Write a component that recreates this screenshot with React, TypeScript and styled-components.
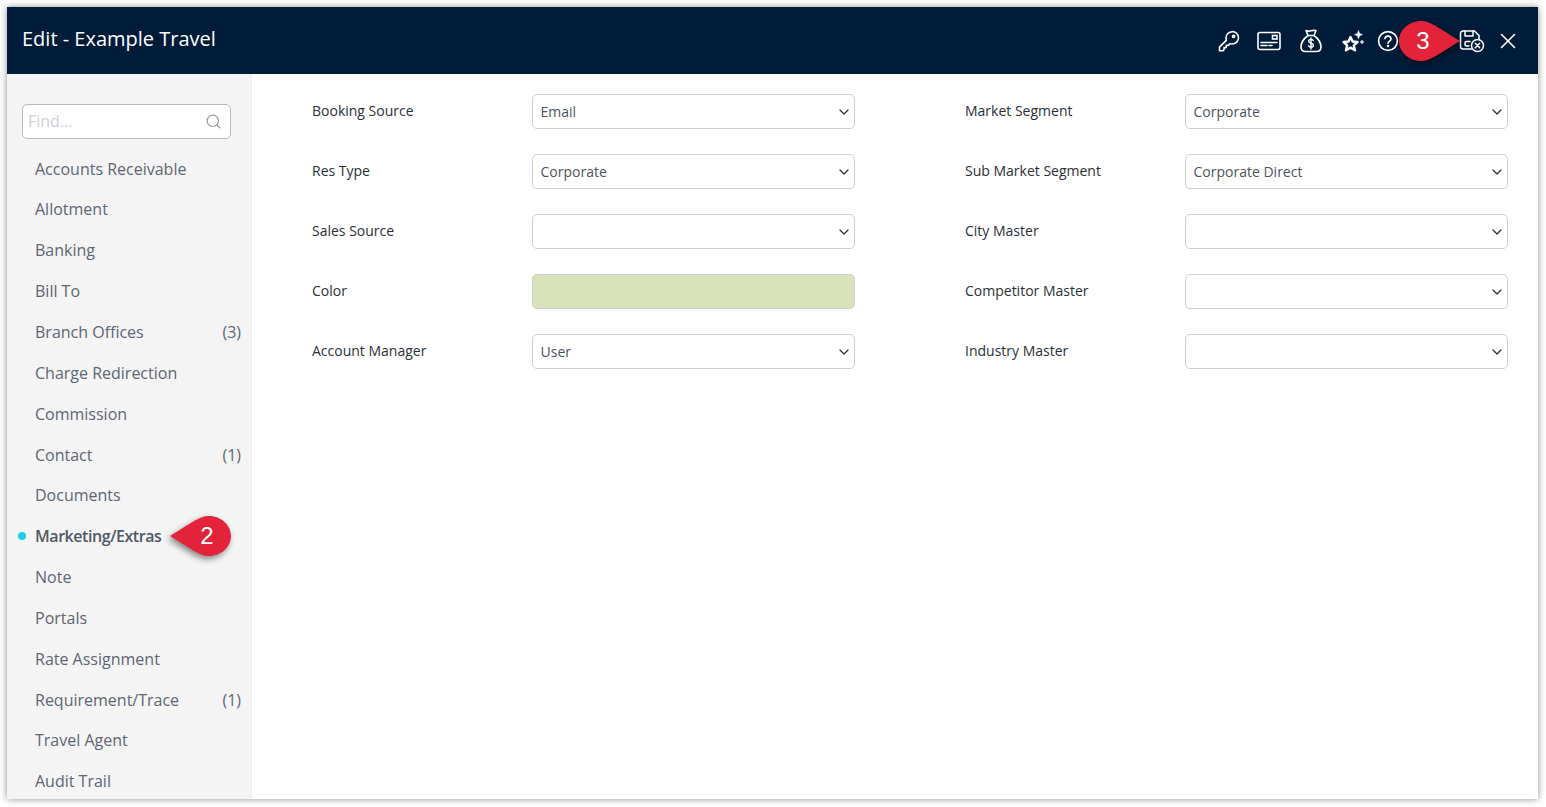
import styled, { createGlobalStyle } from "styled-components";
import { Search, X } from "lucide-react";

const GlobalStyle = createGlobalStyle`
  html, body {
    margin: 0;
    background: #fff;
    overflow: hidden;
  }
  body {
    font-family: "Open Sans", "Liberation Sans", sans-serif;
  }
`;

const navItems = [
  { label: "Accounts Receivable" },
  { label: "Allotment" },
  { label: "Banking" },
  { label: "Bill To" },
  { label: "Branch Offices", count: 3 },
  { label: "Charge Redirection" },
  { label: "Commission" },
  { label: "Contact", count: 1 },
  { label: "Documents" },
  { label: "Marketing/Extras", active: true },
  { label: "Note" },
  { label: "Portals" },
  { label: "Rate Assignment" },
  { label: "Requirement/Trace", count: 1 },
  { label: "Travel Agent" },
  { label: "Audit Trail" },
];

const fields = [
  { label: "Booking Source", value: "Email" },
  { label: "Market Segment", value: "Corporate" },
  { label: "Res Type", value: "Corporate" },
  { label: "Sub Market Segment", value: "Corporate Direct" },
  { label: "Sales Source", value: "" },
  { label: "City Master", value: "" },
  { label: "Color", color: "#d8e3bc" },
  { label: "Competitor Master", value: "" },
  { label: "Account Manager", value: "User" },
  { label: "Industry Master", value: "" },
];

const Callout = ({ n, side }: { n: number; side: "left" | "right" }) => (
  <CalloutWrap $side={side}>
    <CalloutShape $side={side} width="63" height="42" viewBox="0 0 63 42">
      <path d="M23 1C33 1 42 9 62 21C42 33 33 41 23 41C11 41 1 32 1 21C1 10 11 1 23 1Z" fill="#e32339" />
    </CalloutShape>
    <CalloutNumber $side={side}>{n}</CalloutNumber>
  </CalloutWrap>
);

const KeyIcon = () => (
  <svg width="24" height="24" viewBox="0 0 24 24" fill="none" stroke="currentColor" strokeWidth="1.6" strokeLinejoin="round" strokeLinecap="round">
    <path d="M15.2 2.5a6.3 6.3 0 0 1 6.3 6.3c0 3.4-2.9 6.2-6.3 6.2-.8 0-1.5-.1-2.1-.4l-1.700 1.800H9.200v2.200H7v2.100l-1 1H2.500v-3.600l7-7a6 6 0 0 1-.5-2.300c0-3.400 2.800-6.100 6.200-6.100Z" />
    <circle cx="16.6" cy="7.3" r="1.1" />
  </svg>
);

const CardIcon = () => (
  <svg width="24" height="20" viewBox="0 0 24 20" fill="none" stroke="currentColor" strokeWidth="1.6" strokeLinecap="round">
    <rect x="1" y="1.5" width="22" height="17" rx="2" />
    <rect x="15.5" y="4.5" width="4.5" height="3.5" />
    <path d="M4 11.5h16M4 14.5h6M12 14.5h3" />
  </svg>
);

const BagIcon = () => (
  <svg width="22" height="24" viewBox="0 0 22 24" fill="none" stroke="currentColor" strokeWidth="1.6" strokeLinejoin="round" strokeLinecap="round">
    <path d="M6 1.500c2 1 3 .8 5 .2 2-.6 3.500-.4 5-.2l-2 5H8L6 1.500Z" />
    <path d="M8 6.500C4 9.500 1 14 1 18c0 3 2 4.500 4.500 4.500h11c2.500 0 4.500-1.500 4.500-4.500 0-4-3-8.500-7-11.500" />
    <path d="M13.200 11.500c-.5-.8-1.300-1.100-2.200-1.100-1.300 0-2.300.7-2.300 1.900 0 2.600 4.700 1.300 4.700 3.900 0 1.200-1 1.900-2.400 1.900-1 0-1.900-.4-2.400-1.200M11 9v11" strokeWidth="1.400" />
  </svg>
);

const StarsIcon = () => (
  <svg width="24" height="24" viewBox="0 0 24 24" fill="none" stroke="currentColor" strokeLinejoin="round">
    <path d="M9.500 8l2.100 4.500 5 .5-3.800 3.300 1.200 5-4.500-2.700L5 21.300l1.200-5-3.700-3.300 5-.5 2-4.500Z" strokeWidth="2.400" />
    <path d="M17.500 1.500l1.100 3 2.900 1.100-2.900 1.100-1.100 3-1.100-3-2.900-1.100 2.900-1.100 1.100-3Z" fill="currentColor" strokeWidth="0.5" />
    <path d="M21 11l.6 1.400 1.400.6-1.400.6L21 15l-.6-1.400-1.400-.6 1.400-.6L21 11Z" fill="currentColor" strokeWidth="0.5" />
  </svg>
);

const HelpIcon = () => (
  <svg width="22" height="22" viewBox="0 0 22 22" fill="none" stroke="currentColor" strokeWidth="1.600" strokeLinecap="round">
    <circle cx="11" cy="11" r="9.400" />
    <path d="M7.900 8.500a3.100 3.100 0 0 1 6.100.4c0 2-3 2.400-3 4.300" />
    <circle cx="11" cy="16" r="0.500" fill="currentColor" />
  </svg>
);

const SaveCancelIcon = () => (
  <svg width="26" height="24" viewBox="0 0 26 24" fill="none" stroke="currentColor" strokeWidth="1.500" strokeLinejoin="round" strokeLinecap="round">
    <path d="M13 20H4a2.500 2.500 0 0 1-2.500-2.500v-13A2.500 2.500 0 0 1 4 2h11.500L20 6.500v4" />
    <path d="M6 2v5h8V2" />
    <path d="M11 12.500H7.500a1.500 1.500 0 0 0-1.500 1.500v1.500a1.500 1.500 0 0 0 1.500 1.500H10" />
    <circle cx="18.500" cy="16.500" r="6" />
    <path d="M16.300 14.300l4.400 4.400M20.700 14.300l-4.400 4.400" />
  </svg>
);

export default function App() {
  return (
    <Page>
      <GlobalStyle />
      <Window>
        <Header>
          <Title>Edit - Example Travel</Title>
          <Toolbar>
            <ToolButton $width={39}><KeyIcon /></ToolButton>
            <ToolButton $width={42}><CardIcon /></ToolButton>
            <ToolButton $width={42}><BagIcon /></ToolButton>
            <ToolButton $width={42}><StarsIcon /></ToolButton>
            <ToolButton $width={28}><HelpIcon /></ToolButton>
            <SaveButton>
              <Callout n={3} side="right" />
              <SaveCancelIcon />
            </SaveButton>
            <ToolButton $width={36}><X size={26} strokeWidth={1.5} /></ToolButton>
          </Toolbar>
        </Header>
        <Body>
          <Sidebar>
            <SearchBox>
              <SearchInput placeholder="Find..." />
              <Search size={17} strokeWidth={1.6} color="#8f959b" />
            </SearchBox>
            <Nav>
              {navItems.map((item) => (
                <NavItem key={item.label} $active={item.active}>
                  {item.label}
                  {item.count !== undefined && <NavCount>({item.count})</NavCount>}
                  {item.active && <Callout n={2} side="left" />}
                </NavItem>
              ))}
            </Nav>
          </Sidebar>
          <Content>
            <FormGrid>
              {fields.map((field) => (
                <Field key={field.label}>
                  <FieldLabel>{field.label}</FieldLabel>
                  {field.color ? (
                    <ColorSwatch $color={field.color} />
                  ) : (
                    <SelectBox>
                      <Select defaultValue={field.value}>
                        <option value={field.value}>{field.value}</option>
                      </Select>
                      <Chevron width="10" height="6" viewBox="0 0 10 6">
                        <path d="M1 1l4 4 4-4" fill="none" stroke="#2c3138" strokeWidth="1.300" strokeLinecap="round" strokeLinejoin="round" />
                      </Chevron>
                    </SelectBox>
                  )}
                </Field>
              ))}
            </FormGrid>
          </Content>
        </Body>
      </Window>
    </Page>
  );
}

const Page = styled.div`
  box-sizing: border-box;
  width: 1546px;
  height: 807px;
  padding: 7px 8px 8px 7px;
`;

const Window = styled.div`
  height: 792px;
  display: flex;
  flex-direction: column;
  background: #fff;
  box-shadow: 0 0 7px rgba(0, 0, 0, 0.45);
`;

const Header = styled.header`
  flex: 0 0 67px;
  display: flex;
  align-items: center;
  justify-content: space-between;
  padding: 0 12px 0 15px;
  background: #001c38;
  color: #fff;
`;

const Title = styled.h1`
  margin: 0 0 3px;
  font-size: 20px;
  font-weight: 400;
  line-height: 28px;
`;

const Toolbar = styled.div`
  display: flex;
  align-items: center;
  height: 100%;
`;

const ToolButton = styled.div<{ $width: number }>`
  width: ${(p) => p.$width}px;
  display: flex;
  align-items: center;
  justify-content: center;
  color: #fff;
`;

const SaveButton = styled.div`
  position: relative;
  box-sizing: border-box;
  width: 38px;
  margin-left: 50px;
  padding-left: 2px;
  display: flex;
  align-items: center;
  justify-content: center;
  color: #fff;
`;

const CalloutWrap = styled.div<{ $side: "left" | "right" }>`
  position: absolute;
  top: 50%;
  width: 63px;
  height: 42px;
  margin-top: -21px;
  ${(p) => (p.$side === "right" ? "right: 29px;" : "left: 147px;")}
  z-index: 2;
`;

const CalloutShape = styled.svg<{ $side: "left" | "right" }>`
  display: block;
  overflow: visible;
  filter: drop-shadow(2px 3px 3px rgba(0, 0, 0, 0.45));
  ${(p) => (p.$side === "left" ? "transform: scaleX(-1);" : "")}
`;

const CalloutNumber = styled.span<{ $side: "left" | "right" }>`
  position: absolute;
  top: 0;
  ${(p) => (p.$side === "right" ? "left: 0;" : "right: 0;")}
  width: 50px;
  height: 42px;
  display: flex;
  align-items: center;
  justify-content: center;
  font-family: "Liberation Sans", Arial, sans-serif;
  font-size: 24px;
  font-weight: 400;
  letter-spacing: 0;
  color: #fff;
`;

const Body = styled.div`
  flex: 1;
  min-height: 0;
  display: flex;
`;

const Sidebar = styled.aside`
  flex: 0 0 245px;
  box-sizing: border-box;
  padding: 30px 10px 0 15px;
  background: #f4f4f4;
  border-right: 1px solid #ececec;
  overflow: hidden;
`;

const SearchBox = styled.div`
  box-sizing: border-box;
  width: 209px;
  height: 35px;
  display: flex;
  align-items: center;
  padding: 0 8px 0 5px;
  background: #fff;
  border: 1px solid #b9b9b9;
  border-radius: 5px;
`;

const SearchInput = styled.input`
  flex: 1;
  min-width: 0;
  padding: 0 0 2px;
  border: 0;
  outline: 0;
  background: transparent;
  font: 400 16px "Open Sans", sans-serif;
  &::placeholder {
    color: #cfd1d4;
    opacity: 1;
  }
`;

const Nav = styled.nav`
  margin-top: 9.2px;
  display: flex;
  flex-direction: column;
`;

const NavItem = styled.div<{ $active?: boolean }>`
  position: relative;
  height: 40.85px;
  flex-shrink: 0;
  display: flex;
  align-items: center;
  justify-content: space-between;
  padding-left: 13px;
  font-size: 16px;
  letter-spacing: ${(p) => (p.$active ? "-0.44px" : "0")};
  font-weight: ${(p) => (p.$active ? 600 : 400)};
  color: ${(p) => (p.$active ? "#4f5863" : "#5d6672")};
  &::before {
    content: "";
    display: ${(p) => (p.$active ? "block" : "none")};
    position: absolute;
    left: -4px;
    top: 50%;
    width: 8px;
    height: 8px;
    margin-top: -4px;
    border-radius: 50%;
    background: #1fcfe0;
  }
`;

const NavCount = styled.span`
  font-weight: 400;
`;

const Content = styled.main`
  flex: 1;
  padding: 20px 30px 0 60px;
`;

const FormGrid = styled.div`
  display: grid;
  grid-template-columns: 543px 543px;
  column-gap: 110px;
  row-gap: 25px;
`;

const Field = styled.div`
  display: grid;
  grid-template-columns: 220px 323px;
  align-items: center;
`;

const FieldLabel = styled.label`
  margin-bottom: 2px;
  font-size: 14px;
  line-height: 20px;
  color: #2a2f36;
`;

const SelectBox = styled.div`
  position: relative;
  height: 35px;
`;

const Select = styled.select`
  box-sizing: border-box;
  display: block;
  width: 100%;
  height: 100%;
  padding: 0 24px 0 7.5px;
  appearance: none;
  background: #fff;
  border: 1px solid #cfcfcf;
  border-radius: 5px;
  font: 400 14px "Open Sans", sans-serif;
  color: #4a525c;
`;

const Chevron = styled.svg`
  position: absolute;
  top: 15px;
  right: 6px;
  pointer-events: none;
`;

const ColorSwatch = styled.div<{ $color: string }>`
  box-sizing: border-box;
  height: 35px;
  background: ${(p) => p.$color};
  border: 1px solid #cfcfcf;
  border-radius: 5px;
`;
